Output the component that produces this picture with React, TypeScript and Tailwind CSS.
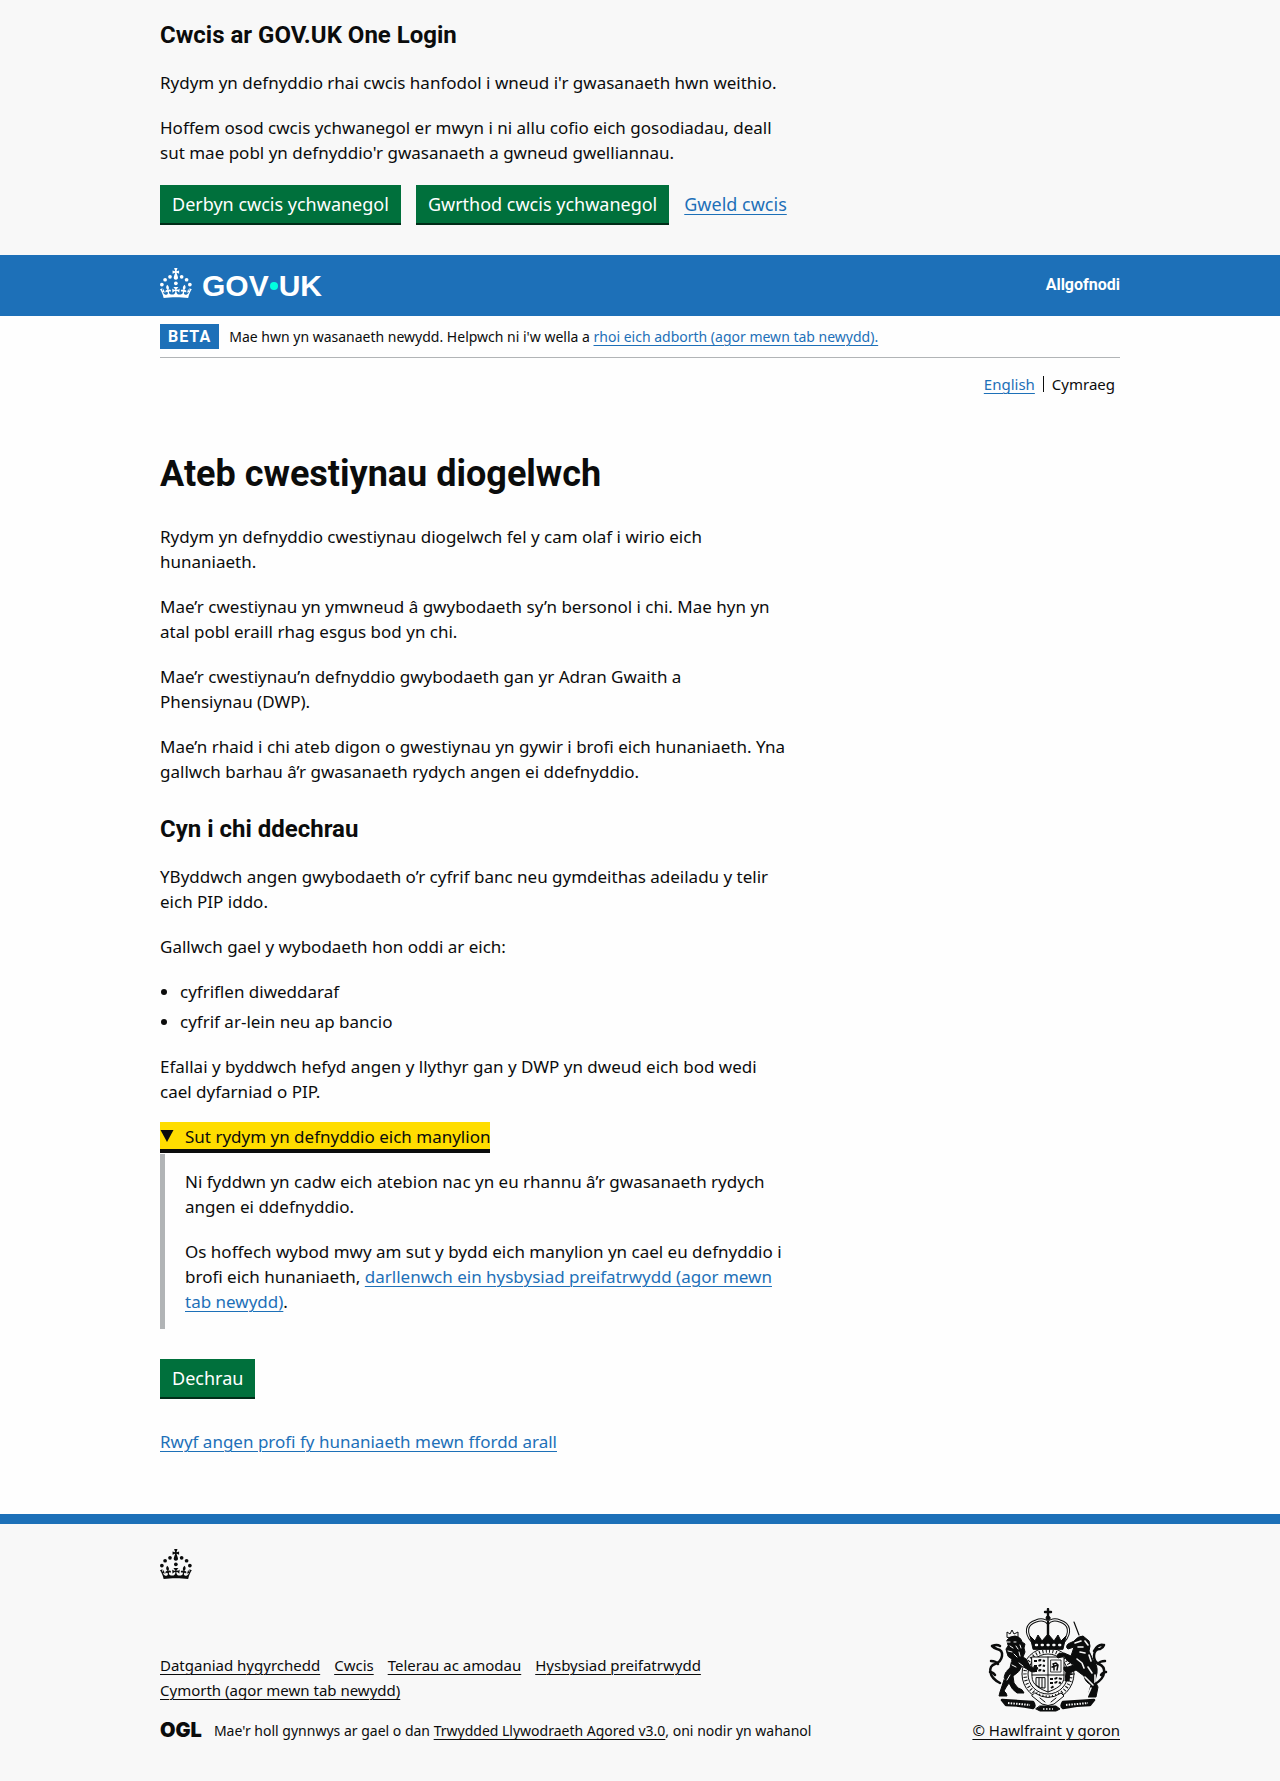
import type { ReactNode } from "react";

const P = "mb-5 text-[17px] leading-[25px]";
const H2 = "mb-5 font-[Roboto,sans-serif] text-2xl leading-[30px] font-bold";
const LINK = "text-[#1d70b8] underline decoration-1 underline-offset-[3px]";
const BTN =
  "bg-[#00703c] px-3 h-[38px] text-lg leading-[19px] text-white shadow-[0_2px_0_#002d18]";
const FOOT = "leading-[25px] text-[#0b0c0c] underline decoration-1 underline-offset-[3px]";

function Container({ children, className = "" }: { children: ReactNode; className?: string }) {
  return (
    <div className="px-[30px]">
      <div className={`mx-auto max-w-[960px] ${className}`}>{children}</div>
    </div>
  );
}

function Crown() {
  return (
    <svg viewBox="0 0 64 60" width="32" height="30" fill="currentColor" aria-hidden="true">
      <circle cx="20" cy="17.6" r="3.7" />
      <circle cx="10.2" cy="23.5" r="3.7" />
      <circle cx="3.7" cy="33.2" r="3.7" />
      <circle cx="31.7" cy="30.6" r="3.7" />
      <circle cx="43.3" cy="17.6" r="3.7" />
      <circle cx="53.2" cy="23.5" r="3.7" />
      <circle cx="59.7" cy="33.2" r="3.7" />
      <path d="M33.1,9.8c.2-.1.3-.3.5-.5l4.6,2.4v-6.8l-4.6,1.5c-.1-.2-.3-.3-.5-.5l1.9-5.9h-6.7l1.9,5.9c-.2.1-.3.3-.5.5l-4.6-1.5v6.8l4.6-2.4c.1.2.3.3.5.5l-2.6,8c-.9,2.8,1.2,5.7,4.1,5.7h0c3,0,5.1-2.9,4.1-5.7l-2.6-8ZM37,37.9s-3.4,3.8-4.1,6.1c2.2,0,4.2-.5,6.4-2.8l-.7,8.5c-2-2.8-4.4-4.1-5.7-3.8.1,3.1.5,6.7,5.8,7.2,3.7.3,6.7-1.5,7-3.8.4-2.6-2-4.3-3.7-1.6-1.4-4.5,2.4-6.1,4.9-3.2-1.9-4.5-1.8-7.7,2.4-10.9,3,4,2.6,7.3-1.2,11.1,2.4-1.3,6.2,0,4,4.6-1.2-2.8-3.7-2.2-4.2.2-.3,1.7.7,3.7,3,4.2,1.9.3,4.7-.9,7-5.9-1.3,0-2.4.7-3.9,1.7l2.4-8c.6,2.3,1.4,3.7,2.2,4.5.6-1.6.5-2.8,0-5.3l5,1.8c-2.6,3.6-5.2,8.7-7.3,17.5-7.4-1.1-15.7-1.7-24.5-1.7h0c-8.8,0-17.1.6-24.5,1.7-2.1-8.9-4.7-13.9-7.3-17.5l5-1.8c-.5,2.5-.6,3.7,0,5.3.8-.8,1.6-2.3,2.2-4.5l2.4,8c-1.5-1-2.6-1.7-3.9-1.7,2.3,5,5.2,6.2,7,5.9,2.3-.4,3.3-2.4,3-4.2-.5-2.4-3-3.1-4.2-.2-2.2-4.6,1.6-6,4-4.6-3.7-3.7-4.2-7.1-1.2-11.1,4.2,3.2,4.3,6.4,2.4,10.9,2.5-2.8,6.3-1.3,4.9,3.2-1.8-2.7-4.1-1-3.7,1.6.3,2.3,3.3,4.1,7,3.8,5.4-.5,5.7-4.2,5.8-7.2-1.3-.2-3.7,1-5.7,3.8l-.7-8.5c2.2,2.3,4.2,2.7,6.4,2.8-.7-2.3-4.1-6.1-4.1-6.1h10.6,0Z" />
    </svg>
  );
}

function Logo() {
  return (
    <a href="#govuk" className="flex h-[30px] items-center text-white">
      <Crown />
      <span className="ml-2.5 flex items-center pt-1.5 font-['Liberation_Sans',sans-serif] text-[30px] leading-[30px] font-bold">
        GOV
        <span className="mx-px size-2 rounded-full bg-[#00ffe0]" />
        UK
      </span>
    </a>
  );
}

function Crest() {
  return (
    <svg viewBox="0 0 120 104" width="120" height="104" fill="none" stroke="#0b0c0c" strokeLinecap="round" strokeLinejoin="round" aria-hidden="true">
      {/* garter */}
      <circle cx="60" cy="66" r="26" strokeWidth="1" />
      <circle cx="60" cy="66" r="23" strokeWidth="3.5" strokeDasharray="1 2.4" strokeLinecap="butt" />
      <circle cx="60" cy="66" r="20" strokeWidth="1" fill="#f8f8f8" />
      {/* crown */}
      <path d="M60 1v9M57 4h6" strokeWidth="2.4" />
      <circle cx="60" cy="10" r="2" fill="#0b0c0c" />
      <path d="M44 33c-7-8-6-17 4-20c5-2 10-1 12 2c2-3 7-4 12-2c10 3 11 12 4 20" strokeWidth="3.2" fill="#f8f8f8" />
      <path d="M44 33c-7-8-6-17 4-20c5-2 10-1 12 2c2-3 7-4 12-2c10 3 11 12 4 20" stroke="#f8f8f8" strokeWidth="1.2" />
      <path d="M60 14v16" strokeWidth="2.4" />
      <path d="M45 41l-3-13l5 5l3-6l4 6l6-7l6 7l4-6l3 6l5-5l-3 13z" fill="#0b0c0c" strokeWidth="1" />
      <path d="M48 37h26" stroke="#f8f8f8" strokeWidth="2.4" strokeDasharray="1 4.800" />
      {/* quartered shield */}
      <path d="M44 49h32v20c0 8-8 12-16 15c-8-3-16-7-16-15z" strokeWidth="1" fill="#f8f8f8" />
      <path d="M60 49v35M44 67h32" strokeWidth="1" />
      <path d="M46 53h4l2-1l5 1M46 58h4l3-1l4 1M46 63h4l2-1l5 1M63 80l3-2M62 71h4l3-1l5 1M62 75h4l3-1l4 1" strokeWidth="2" strokeDasharray="3 1.500" strokeLinecap="butt" />
      <path d="M63 52h10v12h-10z" strokeWidth=".8" />
      <path d="M66 62v-4l-1-2l3-1l2 2l-1 5M64 59l6-2" strokeWidth="1.5" />
      <path d="M48 70v7q4 4 9 3v-10zM51 70v9M54 70v10" strokeWidth="1" />
      {/* lion */}
      <path d="M19 32q3-4 8-4q6 1 7 6l3 2l-1 4l1 4l-2 5l3 2l4 7q3 3 5 0l3 2q-3 6-8 3l-8-5q-2 6-9 10l1 7l4 5q5 1 6 5h-7q-5-3-8-10q-3 4-5 8q3 2 3 5h-8l1-4l4-12q0-8 6-12l2-9q-5-2-5-6l-1-4l2-3z" fill="#0b0c0c" strokeWidth="1" />
      <path d="M19 29l0-5l3 2l2-4l2 4l4-2v5z" strokeWidth="1" />
      <path d="M19 34h3M26 34h2M22 38l3 2M28 38l2 3M32 37l1 3M20 43l4 1M26 46l3 3M31 44l1 4M20 51l3 2M15 60l3 3M24 57l4 2M31 55l4 3M13 69l3 2M22 67l-3 5" stroke="#f8f8f8" strokeWidth="1" />
      <path d="M12 75C0 69 0 58 7 56q6-2 7-8q1-6-5-7q-3-1-5-3q5-2 8 0M3 53q5 0 7 3M2 64q3 0 5 3" strokeWidth="2.5" />
      {/* unicorn */}
      <path d="M86 33q4-5 9-5l6 5q2 5 0 10l4 9q5 5 4 13l-2 8l3 6l-2 10h-8l1-5l2-7q-6-3-7-9l-8-6l-6 3l-1 8h-4l1-9q-3-2-2-5h4l6-2q-8-4-10-9l-6 2q-2-1 0-4l6-1l7 3l3-9l-6 2q-3-2 0-5z" fill="#0b0c0c" strokeWidth="1" />
      <path d="M91 27l-5-13" strokeWidth="1.2" />
      <path d="M87 35l6-2M90 39l5 0M92 44l5 1M89 51l5 4l2 5M97 33l3 4M101 47l2 6M100 59l4 6M97 69l5 5l3 3M103 80l-4 9M107 67l0 8" stroke="#f8f8f8" strokeWidth="1.6" />
      <path d="M107 76c12-7 11-17 4-20q-5-2-5-8q0-7 6-7q3-1 4-4M106 43q4-7 9-6M117 53q-5 0-7 3M118 64q-3 0-5 3" strokeWidth="2.5" />
      {/* motto scroll */}
      <path d="M14 92l31 2q3 4 0 6q-14-3-27-3zM106 92l-31 2q-3 4 0 6q14-3 27-3z" fill="#0b0c0c" strokeWidth="2.5" />
      <path d="M20 95l22 2M78 97l22-2" stroke="#f8f8f8" strokeWidth="2" strokeDasharray="1.5 1.2" strokeLinecap="butt" />
      <path d="M44 88l10 8q6 3 12 0l10-8l-3-3q-13 9-26 0zM52 90l5 4M68 90l-5 4" strokeWidth="1" fill="#f8f8f8" />
      <path d="M52 98h16l4 3l-4 2h-16l-4-2z" fill="#0b0c0c" strokeWidth="1" />
      <path d="M55 101h10" stroke="#f8f8f8" strokeWidth="1.6" strokeDasharray="1.5 1.5" strokeLinecap="butt" />
    </svg>
  );
}

export default function App() {
  return (
    <div className="bg-[#fefefe] font-['Noto_Sans',sans-serif] text-[#0b0c0c]">
      <section className="bg-[#f8f8f8] pt-5 pb-[30px]" aria-label="Cwcis ar GOV.UK One Login">
        <Container>
          <div className="max-w-[630px]">
            <h2 className={H2}>Cwcis ar GOV.UK One Login</h2>
            <p className={P}>Rydym yn defnyddio rhai cwcis hanfodol i wneud i'r gwasanaeth hwn weithio.</p>
            <p className={P}>
              Hoffem osod cwcis ychwanegol er mwyn i ni allu cofio eich gosodiadau, deall sut mae pobl yn defnyddio'r
              gwasanaeth a gwneud gwelliannau.
            </p>
          </div>
          <div className="flex flex-wrap items-center gap-[15px] pb-0.5">
            <button type="button" className={BTN}>Derbyn cwcis ychwanegol</button>
            <button type="button" className={BTN}>Gwrthod cwcis ychwanegol</button>
            <a href="#cwcis" className={`${LINK} text-lg leading-[25px]`}>Gweld cwcis</a>
          </div>
        </Container>
      </section>

      <header className="bg-[#1d70b8] pt-[13px] pb-[18px]">
        <Container className="flex items-center justify-between">
          <Logo />
          <a href="#allgofnodi" className="pt-1 font-[Roboto,sans-serif] text-base leading-5 font-bold text-white">Allgofnodi</a>
        </Container>
      </header>

      <Container>
        <div className="flex items-center gap-2.5 border-b border-[#b1b4b6] py-2">
          <strong className="bg-[#1d70b8] px-2 font-[Roboto,sans-serif] text-base leading-[25px] font-bold tracking-[1px] text-white">BETA</strong>
          <span className="text-sm leading-5">
            Mae hwn yn wasanaeth newydd. Helpwch ni i'w wella a{" "}
            <a href="#adborth" className={LINK}>rhoi eich adborth (agor mewn tab newydd).</a>
          </span>
        </div>
        <nav aria-label="Dewis iaith" className="flex justify-end pt-4 pr-[5px] text-[15px] leading-5">
          <a href="#en" lang="en" className={`${LINK} mr-2`}>English</a>
          <span className="my-0.5 border-l border-[#0b0c0c] pl-2 leading-4">Cymraeg</span>
        </nav>

        <main className="max-w-[630px] pt-[60px] pb-[60px]">
          <h1 className="mb-[30px] font-[Roboto,sans-serif] text-4xl leading-10 font-bold">Ateb cwestiynau diogelwch</h1>
          <p className={P}>Rydym yn defnyddio cwestiynau diogelwch fel y cam olaf i wirio eich hunaniaeth.</p>
          <p className={P}>
            Mae’r cwestiynau yn ymwneud â gwybodaeth sy’n bersonol i chi. Mae hyn yn atal pobl eraill rhag esgus bod yn
            chi.
          </p>
          <p className={P}>Mae’r cwestiynau’n defnyddio gwybodaeth gan yr Adran Gwaith a Phensiynau&nbsp;(DWP).</p>
          <p className={P}>
            Mae’n rhaid i chi ateb digon o gwestiynau yn gywir i brofi eich hunaniaeth. Yna gallwch barhau â’r gwasanaeth
            rydych angen ei ddefnyddio.
          </p>
          <h2 className={`${H2} pt-2.5`}>Cyn i chi ddechrau</h2>
          <p className={P}>YByddwch angen gwybodaeth o’r cyfrif banc neu gymdeithas adeiladu y telir eich PIP iddo.</p>
          <p className={P}>Gallwch gael y wybodaeth hon oddi ar eich:</p>
          <ul className="mb-5 list-disc space-y-[5px] pl-5 text-[17px] leading-[25px]">
            <li>cyfriflen diweddaraf</li>
            <li>cyfrif ar-lein neu ap bancio</li>
          </ul>
          <p className={P}>Efallai y byddwch hefyd angen y llythyr gan y DWP yn dweud eich bod wedi cael dyfarniad o PIP.</p>
          <details open className="mb-[30px] text-[17px] leading-[25px]">
            <summary className="mb-[5px] flex w-fit cursor-pointer items-center gap-2.5 bg-[#ffdd00] shadow-[0_-2px_#ffdd00,0_4px_#0b0c0c]">
              <svg width="15" height="13" viewBox="0 0 15 13" aria-hidden="true">
                <path d="M0.500 0h13l-6.500 12z" fill="#0b0c0c" />
              </svg>
              Sut rydym yn defnyddio eich manylion
            </summary>
            <div className="border-l-[5px] border-[#b1b4b6] py-[15px] pl-5">
              <p className="mb-5">Ni fyddwn yn cadw eich atebion nac yn eu rhannu â’r gwasanaeth rydych angen ei ddefnyddio.</p>
              <p>
                Os hoffech wybod mwy am sut y bydd eich manylion yn cael eu defnyddio i brofi eich hunaniaeth,{" "}
                <a href="#preifatrwydd" className={LINK}>darllenwch ein hysbysiad preifatrwydd (agor mewn tab newydd)</a>.
              </p>
            </div>
          </details>
          <button type="button" className={`${BTN} mb-8 block`}>Dechrau</button>
          <p className="text-[17px] leading-[25px]">
            <a href="#arall" className={LINK}>Rwyf angen profi fy hunaniaeth mewn ffordd arall</a>
          </p>
        </main>
      </Container>

      <footer className="border-t-[10px] border-[#1d70b8] bg-[#f8f8f8] pt-[25px] pb-[39px]">
        <Container>
          <Crown />
          <div className="mt-[29px] flex items-end justify-between gap-[30px]">
            <div>
              <ul className="mb-[15px] flex max-w-[630px] flex-wrap gap-x-3.5 text-[15px] leading-[25px]">
                <li><a href="#hygyrchedd" className={FOOT}>Datganiad hygyrchedd</a></li>
                <li><a href="#cwcis" className={FOOT}>Cwcis</a></li>
                <li><a href="#telerau" className={FOOT}>Telerau ac amodau</a></li>
                <li><a href="#preifatrwydd" className={FOOT}>Hysbysiad preifatrwydd</a></li>
                <li className="basis-full"><a href="#cymorth" className={FOOT}>Cymorth (agor mewn tab newydd)</a></li>
              </ul>
              <div className="flex items-center gap-3">
                <span className="font-[Inter,sans-serif] text-[20px] leading-[25px] font-black">OGL</span>
                <span className="text-sm leading-[25px]">
                  Mae'r holl gynnwys ar gael o dan <a href="#ogl" className={FOOT}>Trwydded Llywodraeth Agored v3.0</a>, oni
                  nodir yn wahanol
                </span>
              </div>
            </div>
            <div className="flex flex-col items-end text-[15px] leading-[25px]">
              <div className="mr-3 mb-1.5"><Crest /></div>
              <a href="#hawlfraint" className={FOOT}>© Hawlfraint y goron</a>
            </div>
          </div>
        </Container>
      </footer>
    </div>
  );
}
